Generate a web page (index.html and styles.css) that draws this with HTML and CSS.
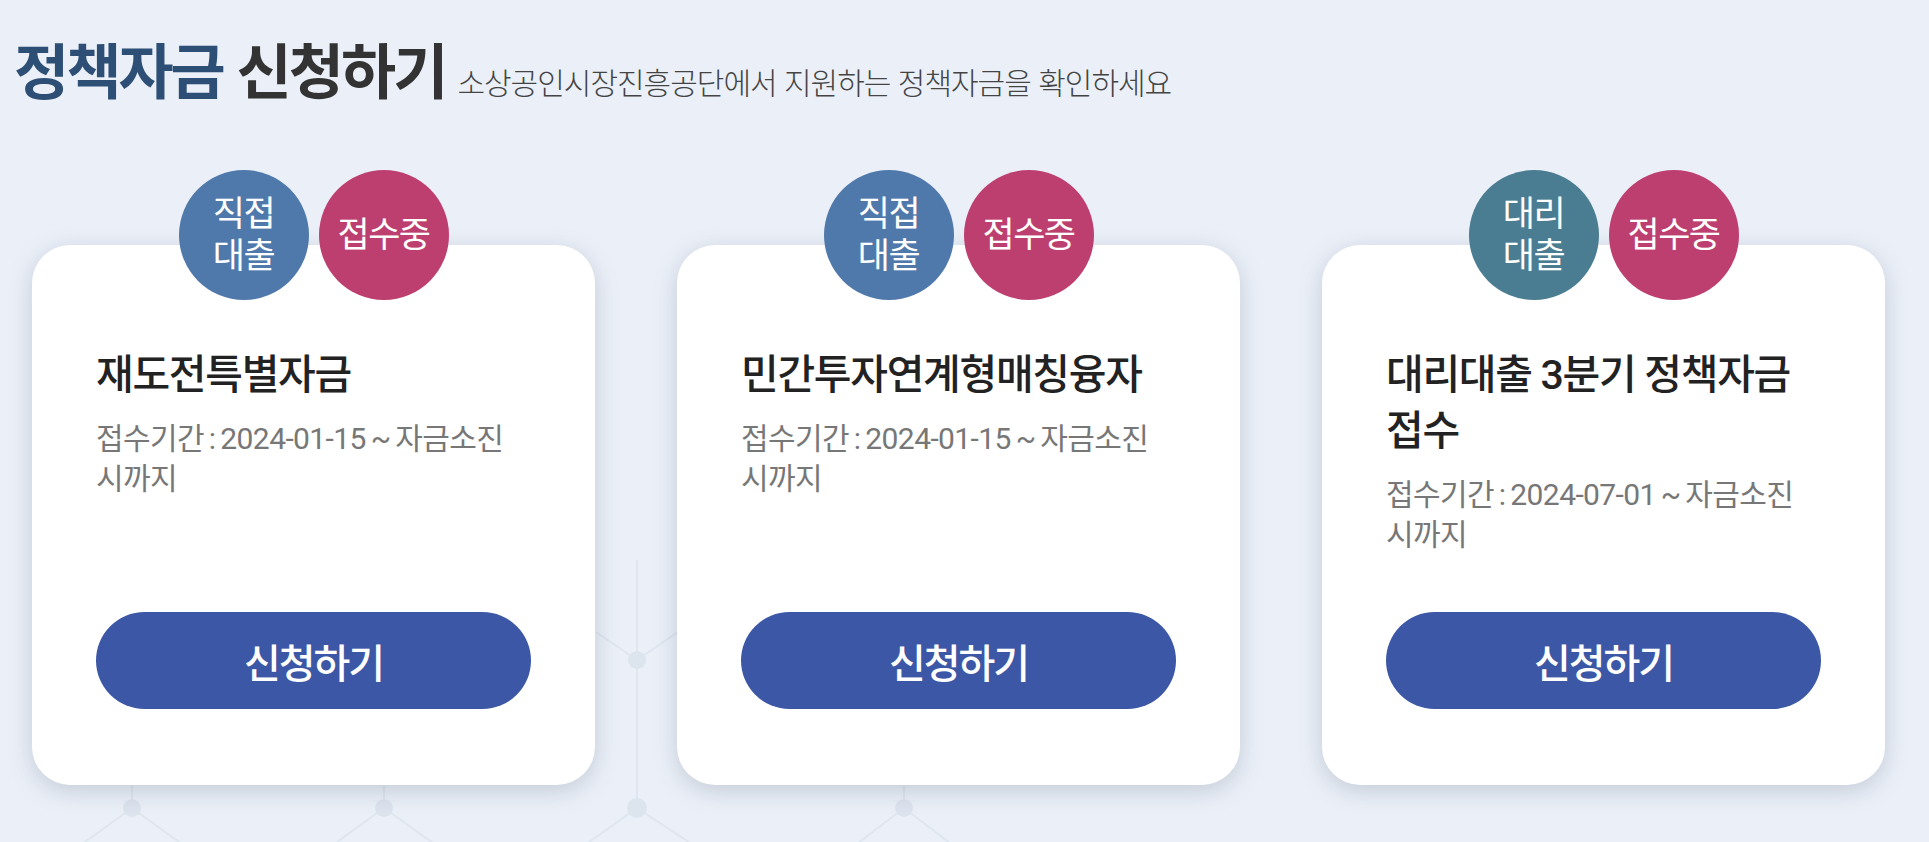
FILE: index.html
```html
<!DOCTYPE html>
<html lang="ko">
<head>
<meta charset="utf-8">
<title>정책자금 신청하기</title>
<link rel="stylesheet" href="styles.css">
</head>
<body>
<div class="page">
  <svg class="bg-deco" width="1929" height="842" viewBox="0 0 1929 842" aria-hidden="true">
    <g stroke="#dfe6ef" stroke-width="2" fill="none">
      <line x1="132" y1="700" x2="132" y2="808"/>
      <line x1="132" y1="808" x2="74" y2="850"/>
      <line x1="132" y1="808" x2="190" y2="850"/>
      <line x1="384" y1="700" x2="384" y2="808"/>
      <line x1="384" y1="808" x2="326" y2="850"/>
      <line x1="384" y1="808" x2="443" y2="850"/>
      <line x1="637" y1="560" x2="637" y2="808"/>
      <line x1="637" y1="660" x2="596" y2="632"/>
      <line x1="637" y1="660" x2="678" y2="632"/>
      <line x1="637" y1="808" x2="578" y2="850"/>
      <line x1="637" y1="808" x2="701" y2="850"/>
      <line x1="904" y1="700" x2="904" y2="808"/>
      <line x1="904" y1="808" x2="849" y2="850"/>
      <line x1="904" y1="808" x2="959" y2="850"/>
    </g>
    <g fill="#dce4ee">
      <circle cx="132" cy="808" r="9"/>
      <circle cx="384" cy="808" r="9"/>
      <circle cx="637" cy="808" r="10"/>
      <circle cx="637" cy="660" r="9"/>
      <circle cx="904" cy="808" r="9"/>
    </g>
  </svg>

  <header class="head">
    <h1 class="head-title"><span class="head-accent">정책자금</span> 신청하기</h1>
    <p class="head-sub">소상공인시장진흥공단에서 지원하는 정책자금을 확인하세요</p>
  </header>

  <section class="cards">
    <article class="card">
      <div class="badges">
        <span class="badge badge-direct"><span class="badge-line">직접</span><span class="badge-line">대출</span></span>
        <span class="badge badge-open"><span class="badge-line">접수중</span></span>
      </div>
      <h2 class="card-title">재도전특별자금</h2>
      <p class="card-period">접수기간 : 2024-01-15 ~ 자금소진시까지</p>
      <a class="card-btn" href="#">신청하기</a>
    </article>

    <article class="card">
      <div class="badges">
        <span class="badge badge-direct"><span class="badge-line">직접</span><span class="badge-line">대출</span></span>
        <span class="badge badge-open"><span class="badge-line">접수중</span></span>
      </div>
      <h2 class="card-title">민간투자연계형매칭융자</h2>
      <p class="card-period">접수기간 : 2024-01-15 ~ 자금소진시까지</p>
      <a class="card-btn" href="#">신청하기</a>
    </article>

    <article class="card">
      <div class="badges">
        <span class="badge badge-agency"><span class="badge-line">대리</span><span class="badge-line">대출</span></span>
        <span class="badge badge-open"><span class="badge-line">접수중</span></span>
      </div>
      <h2 class="card-title">대리대출 3분기 정책자금 접수</h2>
      <p class="card-period">접수기간 : 2024-07-01 ~ 자금소진시까지</p>
      <a class="card-btn" href="#">신청하기</a>
    </article>
  </section>
</div>
</body>
</html>
```

FILE: styles.css
```css
* {
  box-sizing: border-box;
}

html, body {
  margin: 0;
  padding: 0;
}

body {
  background: #ebf0f8;
  font-family: "Roboto", "Noto Sans CJK KR", sans-serif;
  width: 1929px;
  height: 842px;
  overflow: hidden;
}

.page {
  position: relative;
  width: 1929px;
  height: 842px;
}

.bg-deco {
  position: absolute;
  left: 0;
  top: 0;
  z-index: 0;
}

.head {
  position: relative;
  z-index: 1;
  display: flex;
  align-items: baseline;
  gap: 12px;
  padding: 33px 0 0 14px;
}

.head-title {
  margin: 0;
  font-family: "Noto Sans CJK KR", sans-serif;
  font-size: 60px;
  line-height: 70px;
  font-weight: 700;
  letter-spacing: -3px;
  color: #333333;
}

.head-accent {
  color: #2d4f76;
}

.head-sub {
  margin: 0;
  font-family: "Noto Sans CJK KR", sans-serif;
  font-size: 30px;
  font-weight: 300;
  letter-spacing: -1px;
  color: #444444;
}

.cards {
  position: relative;
  z-index: 1;
  display: flex;
  gap: 82px;
  padding-left: 32px;
  margin-top: 142px;
}

.card {
  position: relative;
  width: 563px;
  height: 540px;
  padding: 102px 64px 76px;
  background: #ffffff;
  border-radius: 38px;
  box-shadow: 0 6px 24px rgba(60, 75, 100, 0.22);
  display: flex;
  flex-direction: column;
}

.badges {
  position: absolute;
  top: -75px;
  left: 0;
  right: 0;
  display: flex;
  justify-content: center;
  gap: 10px;
}

.badge {
  width: 130px;
  height: 130px;
  padding-bottom: 6px;
  border-radius: 50%;
  display: flex;
  flex-direction: column;
  align-items: center;
  justify-content: center;
  text-align: center;
  color: #ffffff;
  font-family: "Noto Sans CJK KR", sans-serif;
  font-size: 35px;
  font-weight: 400;
  letter-spacing: -1.5px;
}

.badge-line {
  display: block;
  height: 42px;
  line-height: 42px;
}

.badge-direct {
  background: #5079ab;
}

.badge-agency {
  background: #4a7d91;
}

.badge-open {
  background: #bd3f70;
}

.card-title {
  margin: 0;
  font-size: 41px;
  line-height: 56px;
  font-weight: 500;
  letter-spacing: -1.3px;
  color: #222222;
  word-break: keep-all;
}

.card-period {
  margin: 16px 0 0;
  max-width: 422px;
  font-size: 30px;
  line-height: 40px;
  font-weight: 400;
  letter-spacing: -0.6px;
  word-spacing: -2px;
  color: #777777;
}

.card-btn {
  margin-top: auto;
  height: 97px;
  border-radius: 49px;
  background: #3c57a5;
  display: flex;
  align-items: center;
  justify-content: center;
  color: #ffffff;
  text-decoration: none;
  font-size: 40px;
  font-weight: 500;
  letter-spacing: -2px;
}
```
